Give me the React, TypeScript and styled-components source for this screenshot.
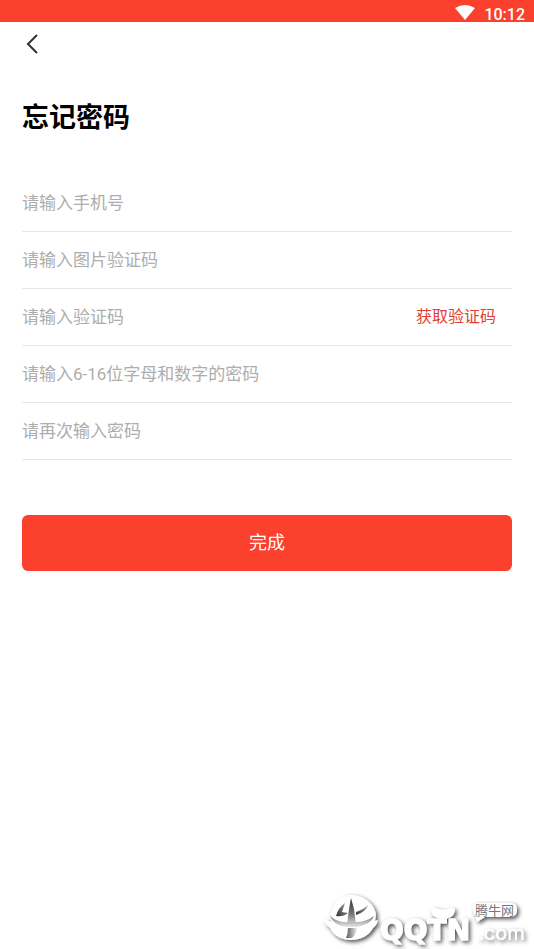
import React, { useState } from "react";
import styled, { createGlobalStyle } from "styled-components";

const GlobalStyle = createGlobalStyle`
  *, *::before, *::after { box-sizing: border-box; }
  body {
    margin: 0;
    background: #fff;
    font-family: Roboto, "Noto Sans CJK SC", sans-serif;
  }
`;

const Screen = styled.div`
  min-height: 100vh;
  position: relative;
  display: flex;
  flex-direction: column;
`;

const StatusBar = styled.header`
  height: 22px;
  padding: 5px 9px 0 0;
  display: flex;
  align-items: flex-start;
  justify-content: flex-end;
  gap: 9px;
  background: #fb402d;
  color: #fff;
`;

const Clock = styled.time`
  font-size: 16px;
  font-weight: 500;
  line-height: 20px;
`;

const WifiIcon = styled.svg`
  width: 20px;
  height: 16px;
`;

const NavBar = styled.nav`
  height: 44px;
  padding: 0 22px;
  display: flex;
  align-items: center;
`;

const BackButton = styled.button`
  width: 20px;
  height: 24px;
  padding: 0;
  border: 0;
  background: none;
  cursor: pointer;

  svg {
    display: block;
  }
`;

const Form = styled.form`
  padding: 32px 22px;
  display: flex;
  flex-direction: column;
`;

const Title = styled.h1`
  margin: 0 0 37px;
  font-size: 27px;
  line-height: 40px;
  font-weight: 700;
  color: #000;
`;

const Field = styled.div`
  height: 57px;
  display: flex;
  align-items: center;
  border-bottom: 1px solid #e6e6e6;
`;

const TextInput = styled.input`
  flex: 1;
  min-width: 0;
  height: 56px;
  padding: 0;
  border: 0;
  outline: 0;
  background: none;
  font-family: inherit;
  font-size: 17px;
  font-weight: 400;
  color: #222;

  &::placeholder {
    color: #adadad;
    opacity: 1;
  }
`;

const CodeButton = styled.button`
  padding: 0 16px;
  border: 0;
  background: none;
  font-family: inherit;
  font-size: 16px;
  line-height: 24px;
  color: #e2402f;
  cursor: pointer;
`;

const SubmitButton = styled.button`
  height: 56px;
  margin-top: 55px;
  padding: 0 0 4px;
  border: 0;
  border-radius: 6px;
  background: #fb402d;
  color: #fff;
  font-family: inherit;
  font-size: 18px;
  cursor: pointer;
`;

const Watermark = styled.svg`
  position: absolute;
  right: 0;
  bottom: 0;
  width: 214px;
  height: 64px;
  pointer-events: none;
`;

const Wordmark = styled.text`
  font-family: "DejaVu Sans", sans-serif;
  font-size: 28px;
  font-weight: 700;
`;

const DomainText = styled.text`
  font-family: Inter, sans-serif;
  font-size: 20px;
  font-weight: 400;
`;

const BubbleText = styled.text`
  font-family: "Noto Sans CJK SC", sans-serif;
  font-size: 13px;
`;

const fields = [
  { name: "phone", type: "tel", hint: "请输入手机号" },
  { name: "captcha", type: "text", hint: "请输入图片验证码" },
  { name: "smsCode", type: "text", hint: "请输入验证码", sendsCode: true },
  { name: "password", type: "password", hint: "请输入6-16位字母和数字的密码" },
  { name: "confirm", type: "password", hint: "请再次输入密码" },
];

function SiteLogo() {
  return (
    <Watermark viewBox="0 0 214 64" role="img" aria-label="腾牛网 QQTN.com">
      <defs>
        <filter id="logoShadow" x="-10%" y="-20%" width="125%" height="150%">
          <feDropShadow dx="2" dy="2" stdDeviation="2" floodColor="#000" floodOpacity="0.7" />
        </filter>
        <linearGradient id="spikeShade" x1="0" y1="0" x2="0" y2="1">
          <stop offset="0" stopColor="#333" />
          <stop offset="0.6" stopColor="#777" />
          <stop offset="1" stopColor="#ddd" />
        </linearGradient>
        <linearGradient id="finShade" x1="0" y1="1" x2="1" y2="0">
          <stop offset="0" stopColor="#333" />
          <stop offset="1" stopColor="#aaa" />
        </linearGradient>
        <linearGradient id="bandShade" x1="0" y1="0" x2="0" y2="1">
          <stop offset="0" stopColor="#777" />
          <stop offset="1" stopColor="#e8e8e8" />
        </linearGradient>
        <linearGradient id="snoutShade" x1="0" y1="0" x2="1" y2="0">
          <stop offset="0" stopColor="#555" />
          <stop offset="1" stopColor="#eee" />
        </linearGradient>
        <filter id="soft">
          <feGaussianBlur stdDeviation="0.6" />
        </filter>
      </defs>
      <g filter="url(#logoShadow)" fill="#fff">
        <path d="M31 10C43 10 54 18 56 29L55 36L58 35Q57 40 53 43C49 51 40 55 31 55C22 55 14 51 10 43Q6 40 4 35L12 37Q10 35 11 28C13 18 21 10 31 10Z" />
        <Wordmark x="60" y="55" stroke="#fff" strokeWidth="1">QQTN</Wordmark>
        <DomainText x="158" y="55">.com</DomainText>
        <path d="M111 26Q111 22 116 23Q124 27 131 23Q135 22 135 26Q133 34 123 34Q113 34 111 26Z" />
        <path d="M159 18H190Q197 18 197 25Q197 32 190 32H165L157 37L155 31Q149 18 159 18Z" />
      </g>
      <g filter="url(#soft)">
        <path d="M31 13L34 24L36 40H27L29 24Z" fill="url(#spikeShade)" />
        <path d="M25 18L22 27L28 28Q23 32 16 31Q18 23 25 18Z" fill="url(#finShade)" />
        <path d="M48 20Q46 27 36 30V27Q43 25 48 20Z" fill="url(#finShade)" />
        <path d="M10 31Q18 38 28 37H36Q46 37 54 31Q51 40 36 42H27Q14 41 10 31Z" fill="url(#bandShade)" />
        <path d="M28 43H37Q36 50 32 53H26Q28 49 28 43Z" fill="url(#snoutShade)" />
      </g>
      <BubbleText x="155" y="30" fill="#777">腾牛网</BubbleText>
    </Watermark>
  );
}

export default function App() {
  const [values, setValues] = useState<Record<string, string>>({});

  return (
    <>
      <GlobalStyle />
      <Screen>
        <StatusBar>
          <WifiIcon viewBox="0 0 20 16" aria-hidden="true">
            <path d="M0 3Q10 -3 20 3L10 15Z" fill="#fff" />
          </WifiIcon>
          <Clock>10:12</Clock>
        </StatusBar>
        <NavBar>
          <BackButton type="button" aria-label="返回">
            <svg width="20" height="24" viewBox="0 0 20 24" fill="none">
              <path d="M15 3L6 12L15 21" stroke="#333" strokeWidth="2" />
            </svg>
          </BackButton>
        </NavBar>
        <Form onSubmit={(event) => event.preventDefault()}>
          <Title>忘记密码</Title>
          {fields.map((field) => (
            <Field key={field.name}>
              <TextInput
                name={field.name}
                type={field.type}
                aria-label={field.hint}
                placeholder={field.hint}
                value={values[field.name] ?? ""}
                onChange={(event) => setValues({ ...values, [field.name]: event.target.value })}
              />
              {field.sendsCode && <CodeButton type="button">获取验证码</CodeButton>}
            </Field>
          ))}
          <SubmitButton type="submit">完成</SubmitButton>
        </Form>
        <SiteLogo />
      </Screen>
    </>
  );
}
